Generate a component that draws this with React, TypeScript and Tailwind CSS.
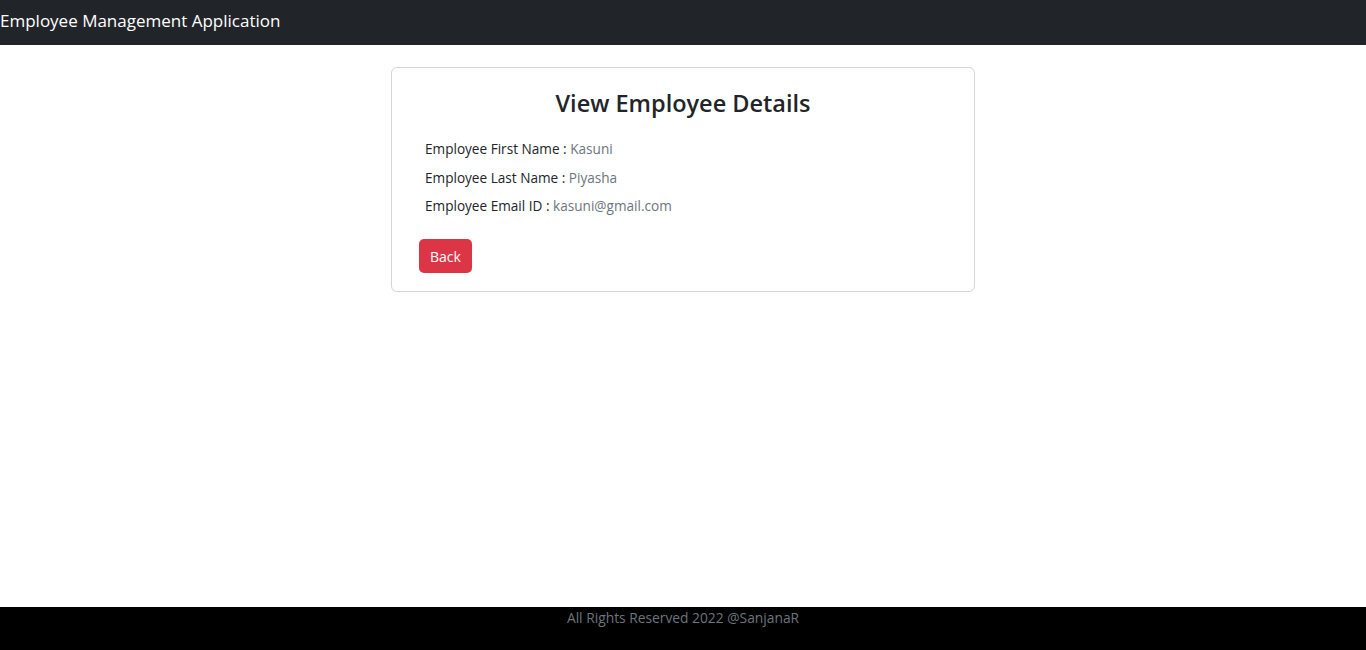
export default function App() {
  const details = [
    { label: "Employee First Name", value: "Kasuni" },
    { label: "Employee Last Name", value: "Piyasha" },
    { label: "Employee Email ID", value: "kasuni@gmail.com" },
  ];

  return (
    <div className="flex min-h-screen flex-col bg-white font-['Open_Sans',sans-serif] text-[#212529]">
      {/* HEADER */}
      <header className="flex h-[45px] items-start bg-[#212529] pt-[10px]">
        <span className="text-[17px] leading-[22px] text-white">
          Employee Management Application
        </span>
      </header>

      <main className="flex-1 pt-[22px]">
        <div className="mx-auto w-[584px] rounded-md border border-[#d5d5d5] px-[27px] pb-[18px] pt-[20px]">
          <h3 className="text-center text-[23.5px] font-semibold leading-[30px]">
            View Employee Details
          </h3>
          <div className="mt-[21px] flex flex-col gap-[9.5px] px-[6px]">
            {details.map((d) => (
              <div key={d.label} className="text-[13.6px] leading-[19px]">
                {d.label} : <span className="text-[#6c757d]">{d.value}</span>
              </div>
            ))}
          </div>
          <button className="mt-[24px] flex h-[34px] w-[53px] items-center justify-center rounded-[5px] bg-[#dc3545] text-[14px] text-white">
            Back
          </button>
        </div>
      </main>

      {/* FOOTER */}
      <footer className="h-[43px] bg-black pt-[1px] text-center text-[13.8px] leading-[20px] text-[#6c757d]">
        All Rights Reserved 2022 @SanjanaR
      </footer>
    </div>
  );
}
